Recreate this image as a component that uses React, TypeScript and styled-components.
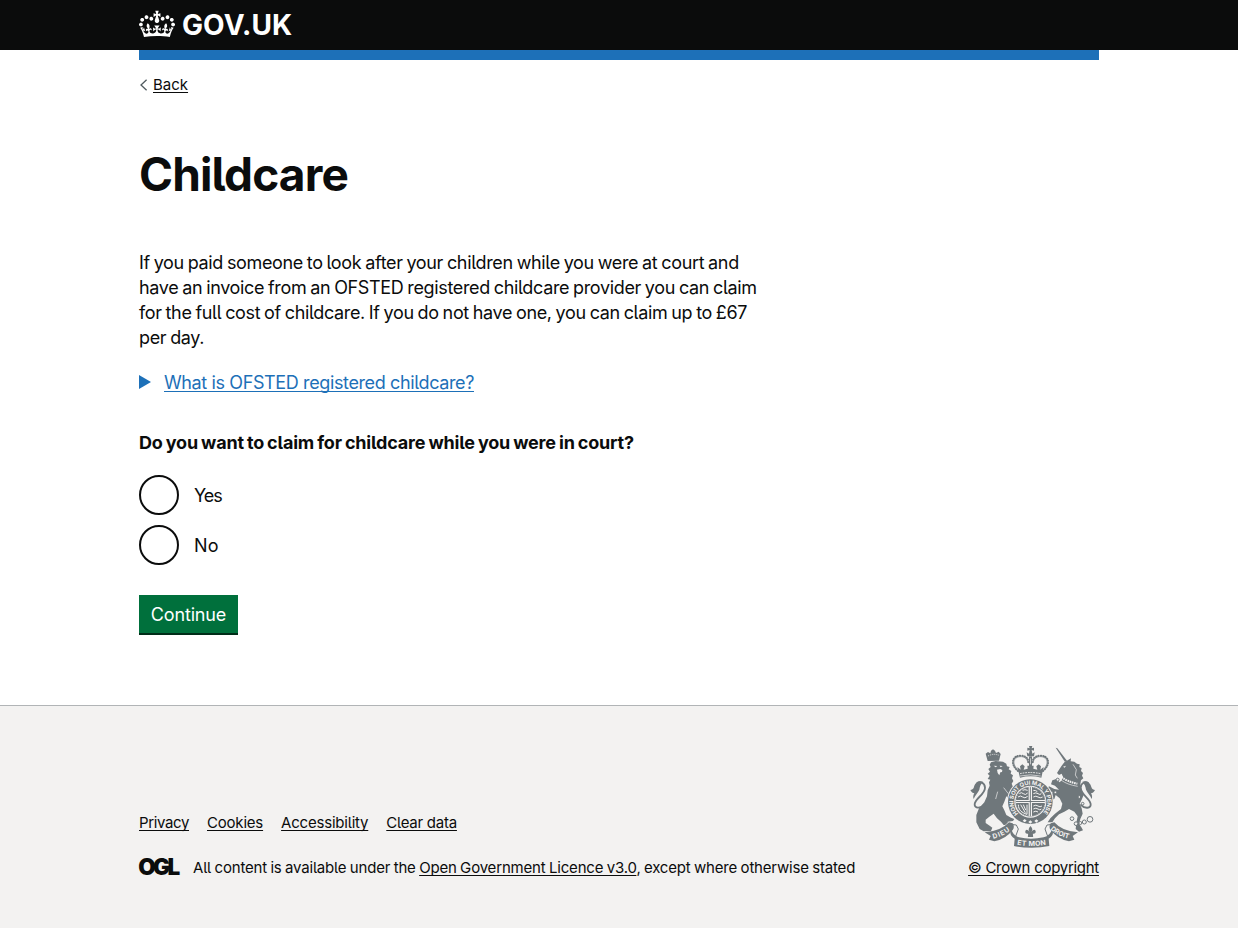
import React from 'react';
import styled, { createGlobalStyle } from 'styled-components';

const ink = '#0b0c0c';
const blue = '#1d70b8';
const grey = '#f3f2f1';
const crestGrey = '#6f777b';

const GlobalStyle = createGlobalStyle`
  *, *::before, *::after { box-sizing: border-box; }
  body {
    margin: 0;
    background: #fff;
    color: ${ink};
    font-family: Inter, "Liberation Sans", sans-serif;
    font-feature-settings: "cv05";
  }
  h1, p, ul, fieldset, legend { margin: 0; padding: 0; border: 0; }
`;

const Page = styled.div`
  min-height: 928px;
  display: flex;
  flex-direction: column;
`;

const Container = styled.div`
  width: 960px;
  margin: 0 auto;
`;

const Header = styled.header`
  height: 50px;
  background: ${ink};
`;

const Logo = styled.a`
  display: flex;
  align-items: center;
  height: 50px;
  color: #fff;
  text-decoration: none;
  svg { display: block; fill: currentColor; margin-top: -2px; }
`;

const LogoText = styled.span`
  margin-left: 7px;
  font-size: 28px;
  font-weight: 700;
  line-height: 34px;
  letter-spacing: 0.1px;
`;

const BlueBar = styled.div`
  height: 10px;
  background: ${blue};
`;

const Link = styled.a<{ $track?: number; $color?: string }>`
  color: ${p => p.$color || ink};
  letter-spacing: ${p => p.$track || 0}px;
  text-decoration: underline;
  text-decoration-thickness: 1px;
  text-underline-offset: 2px;
  text-decoration-skip-ink: none;
`;

const BackRow = styled.div`
  display: flex;
  align-items: center;
  gap: 5px;
  margin-top: 15px;
  font-size: 15px;
  line-height: 20px;
`;

const Main = styled.main`
  padding-top: 54px;
`;

const Title = styled.h1`
  font-size: 46px;
  line-height: 50px;
  font-weight: 700;
  letter-spacing: -0.85px;
  margin-bottom: 51px;
`;

const Column = styled.div`
  width: 630px;
  font-size: 18px;
  line-height: 25px;
`;

const Paragraph = styled.p`
  letter-spacing: -0.35px;
  word-spacing: -0.82px;
  margin-bottom: 20px;
`;

const Summary = styled.div`
  display: flex;
  align-items: center;
  gap: 13px;
  margin-bottom: 35px;
`;

const Triangle = styled.span`
  border-style: solid;
  border-width: 7px 0 7px 12px;
  border-color: transparent transparent transparent ${blue};
  margin-top: -1px;
`;

const Legend = styled.legend`
  font-weight: 700;
  letter-spacing: -0.18px;
  word-spacing: -1px;
  margin-bottom: 20px;
`;

const Radios = styled.div`
  display: flex;
  flex-direction: column;
  gap: 10px;
  margin-bottom: 30px;
`;

const RadioLabel = styled.label<{ $track?: number }>`
  display: flex;
  align-items: center;
  height: 40px;
  gap: 15px;
  letter-spacing: ${p => p.$track || 0}px;
`;

const Radio = styled.input`
  appearance: none;
  width: 40px;
  height: 40px;
  margin: 0;
  border: 2px solid ${ink};
  border-radius: 50%;
  background: #fff;
`;

const Button = styled.button`
  display: block;
  width: 99px;
  height: 38px;
  padding: 7px 0 6px;
  border: 0;
  background: #00703c;
  box-shadow: 0 2px 0 #002d18;
  color: #fff;
  font: inherit;
  font-feature-settings: inherit;
  line-height: 25px;
  letter-spacing: -0.15px;
`;

const Footer = styled.footer`
  flex: 1;
  margin-top: 72px;
  border-top: 1px solid #b1b4b6;
  background: ${grey};
  font-size: 15px;
  line-height: 20px;
`;

const FooterInner = styled(Container)`
  display: flex;
  justify-content: space-between;
  align-items: flex-end;
  padding-top: 40px;
`;

const FooterNav = styled.nav`
  display: flex;
  gap: 18px;
  margin-bottom: 25px;
`;

const Licence = styled.div`
  display: flex;
  align-items: center;
  gap: 12px;
  letter-spacing: -0.18px;
  word-spacing: -0.6px;
  svg { display: block; margin-top: -3px; }
`;

const Copyright = styled.div`
  display: flex;
  flex-direction: column;
  align-items: center;
  gap: 10px;
  svg { display: block; margin-right: 2px; }
`;

const CrownMark = () => (
  <svg width="36" height="30" viewBox="0 0 132 97" aria-hidden="true">
    <path fillRule="evenodd" d="M25 30.2c3.5 1.5 7.7-.2 9.1-3.7 1.5-3.6-.2-7.8-3.9-9.2-3.6-1.4-7.6.3-9.1 3.9-1.4 3.5.3 7.5 3.9 9zM9 39.5c3.6 1.5 7.8-.2 9.2-3.7 1.5-3.6-.2-7.8-3.9-9.1-3.6-1.5-7.6.2-9.1 3.8-1.4 3.5.3 7.5 3.8 9zM4.4 57.2c3.5 1.5 7.7-.2 9.1-3.8 1.5-3.6-.2-7.7-3.9-9.1-3.5-1.5-7.6.3-9.1 3.8-1.4 3.5.3 7.6 3.9 9.1zm38.3-21.4c3.5 1.5 7.7-.2 9.1-3.8 1.5-3.6-.2-7.7-3.9-9.1-3.6-1.5-7.6.3-9.1 3.8-1.3 3.6.4 7.7 3.9 9.1zm64.4-5.6c-3.6 1.5-7.8-.2-9.1-3.7-1.5-3.6.2-7.8 3.8-9.2 3.6-1.4 7.7.3 9.2 3.9 1.3 3.5-.4 7.5-3.9 9zm15.9 9.3c-3.6 1.5-7.7-.2-9.1-3.7-1.5-3.6.2-7.8 3.7-9.1 3.6-1.5 7.7.2 9.2 3.8 1.5 3.5-.3 7.5-3.8 9zm4.7 17.7c-3.6 1.5-7.8-.2-9.2-3.8-1.5-3.6.2-7.7 3.9-9.1 3.6-1.5 7.7.3 9.2 3.8 1.3 3.5-.4 7.6-3.9 9.1zM89.3 35.8c-3.6 1.5-7.8-.2-9.2-3.8-1.4-3.6.2-7.7 3.9-9.1 3.6-1.5 7.7.3 9.2 3.8 1.4 3.6-.3 7.7-3.9 9.1zM69.7 17.7l8.9 4.7V9.3l-8.9 2.8c-.2-.3-.5-.6-.9-.9L72.4 0H59.6l3.5 11.2c-.3.3-.6.5-.9.9l-8.8-2.8v13.1l8.8-4.7c.3.3.6.7.9.9l-5 15.4v.1c-.2.8-.4 1.6-.4 2.4 0 4.1 3.1 7.5 7 8.1h.2c.3 0 .7.1 1 .1.4 0 .7 0 1-.1h.2c4-.6 7.1-4.1 7.1-8.1 0-.8-.1-1.7-.4-2.4V34l-5.1-15.4c.4-.2.7-.6 1-.9zM66 92.8c16.9 0 32.8 1.1 47.1 3.2 4-16.9 8.9-26.7 14-33.5l-9.6-3.4c1 4.9 1.1 7.2 0 10.2-1.5-1.4-3-4.3-4.2-8.7L108.6 76c2.8-2 5-3.2 7.5-3.3-4.4 9.4-10 11.9-13.6 11.2-4.3-.8-6.3-4.6-5.6-7.9 1-4.7 5.7-5.9 8-.5 4.3-8.7-3-11.4-7.6-8.8 7.1-7.2 7.9-13.5 2.1-21.1-8 6.1-8.1 12.3-4.5 20.8-4.7-5.4-12.1-2.5-9.5 6.2 3.4-5.2 7.9-2 7.2 3.1-.6 4.3-6.4 7.8-13.5 7.2-10.3-.9-10.9-8-11.2-13.8 2.5-.5 7.1 1.8 11 7.3L80.2 60c-4.1 4.4-8 5.3-12.3 5.4 1.4-4.4 8-11.6 8-11.6H55.5s6.4 7.2 7.9 11.6c-4.2-.1-8-1-12.3-5.4l1.4 16.4c3.9-5.5 8.5-7.7 10.9-7.3-.3 5.8-.9 12.8-11.1 13.8-7.2.6-12.9-2.9-13.5-7.2-.7-5 3.8-8.3 7.1-3.1 2.7-8.7-4.6-11.6-9.4-6.2 3.7-8.5 3.6-14.7-4.6-20.8-5.8 7.6-5 13.9 2.2 21.1-4.7-2.6-11.9.1-7.7 8.8 2.3-5.5 7.1-4.2 8.1.5.7 3.3-1.3 7.1-5.7 7.9-3.5.7-9-1.8-13.5-11.2 2.5.1 4.7 1.3 7.5 3.3l-4.7-15.4c-1.2 4.4-2.7 7.2-4.3 8.7-1.1-3-.9-5.3 0-10.2l-9.5 3.4c5 6.9 9.9 16.7 14 33.5 14.8-2.1 30.8-3.2 47.7-3.2z" />
  </svg>
);

const OglMark = () => (
  <svg width="42" height="18" viewBox="0 0 42 18" overflow="visible" aria-hidden="true">
    <text transform="translate(-0.8 17) scale(1 1)" letterSpacing="-2.6" fontFamily="Inter" fontWeight="900" fontSize="22.5" fill={ink}>OGL</text>
  </svg>
);

const Crest = () => (
  <svg width="125" height="102" viewBox="9 9 375 306" fill={crestGrey} stroke="none" aria-hidden="true">
    <defs>
      <path id="garter" d="M154 212A51 51 0 1 1 226 212" />
      <path id="dieu" d="M79 287Q108 281 134 259" />
      <path id="mon" d="M150 305Q193 313 239 305" />
      <path id="droit" d="M250 259Q276 282 308 287" />
    </defs>

    {/* lion */}
    <path d="M62 54L56 32l7-5 7 4 2-8 6-4 6 4 3 7 8-4 6 7-5 20z" />
    <path fill="none" stroke={grey} strokeWidth="2.500" strokeDasharray="3 3" d="M63 39q17-9 33-2" />
    <path d="M72 58L86 54 108 56 118 62 120 70 128 72 125 79 133 84 131 92 138 97 135 106 139 114 134 122 138 132 133 140 141 152 148 164 149 178 141 186 133 182 130 172 118 160 112 176 106 190 112 202 118 216 132 224 142 228 138 234 122 236 124 246 110 246 102 236 90 226 80 212 66 222 56 230 56 240 68 248 76 254 72 264 50 265 38 258 28 238 28 216 36 196 52 178 60 160 62 142 68 128 66 118 70 110 62 108 68 98 62 92 69 86 64 78 71 72 68 65z" />
    <path fill="none" stroke={crestGrey} strokeWidth="5.500" strokeLinecap="round" d="M54 184C40 198 22 197 23 183C25 166 54 154 54 134C53 118 38 115 31 120" />
    <path d="M48 116C32 110 23 122 21 132C19 139 14 140 10 141C14 148 17 150 22 151C18 157 18 164 20 168C24 156 33 150 37 140C38 130 42 122 48 116z" />
    <path fill={grey} d="M80 68l11 1-5 4zM98 68l9 1-6 4zM90 80l10-2 6 3-1 6-5 1-3 9-5-7z" />
    <path fill="none" stroke={grey} strokeWidth="2" d="M92 146l-6 22M110 134l14 18" />

    {/* unicorn */}
    <path d="M266 14l5 2 29 37-6 4z" />
    <path d="M292 58L302 52 312 46 311 55 322 56 330 62 338 64 337 72 344 76 342 84 348 90 345 98 349 106 342 112 340 124 344 140 350 156 344 170 338 182 344 196 347 212 340 228 336 242 344 254 348 262 336 266 326 258 328 240 332 220 322 206 306 198 292 206 276 214 264 226 256 238 242 238 250 226 264 212 282 198 286 182 278 166 266 156 262 168 252 172 248 162 256 156 256 146 246 148 240 138 246 130 262 138 276 140 264 128 252 124 256 112 268 108 278 118 284 112 288 102 284 92 276 96 270 90 276 80 284 68z" />
    <path fill="none" stroke={crestGrey} strokeWidth="5.500" strokeLinecap="round" d="M342 186C354 198 372 197 371 183C369 166 341 154 341 134C342 118 356 115 363 120" />
    <path d="M346 116C362 110 371 122 373 132C375 139 380 140 384 141C380 148 377 150 372 151C376 157 376 164 374 168C370 156 361 150 357 140C356 130 352 122 346 116z" />
    <path fill={grey} d="M288 71l9-3-4 6z" />
    <path fill="none" stroke={grey} strokeWidth="6" strokeDasharray="5 2" d="M284 102q16 14 47 20" />
    <path fill="none" stroke={grey} strokeWidth="2" d="M282 111q18 14 50 19M318 64l10 16-3 16 6 10" />
    <g fill={grey} stroke={crestGrey} strokeWidth="3">
      <circle cx="315" cy="227" r="5.500" /><circle cx="327" cy="242" r="5.500" /><circle cx="340" cy="240" r="4.500" />
      <circle cx="352" cy="237" r="6" /><circle cx="369" cy="229" r="8.500" /><circle cx="337" cy="162" r="4" />
      <circle cx="347" cy="182" r="4" />
      <circle cx="272" cy="110" r="4.500" /><circle cx="265" cy="148" r="4" />
    </g>

    {/* crown */}
    <path d="M186 9h10l-2 7 7-2v9l-7-2 2 11 7-4-2 12h-20l-2-12 7 4 2-11-7 2v-9l7 2z" />
    <g fill="none" stroke={crestGrey}>
      <path strokeWidth="6" strokeLinecap="round" strokeDasharray="1 6" d="M153 84C128 62 136 37 162 38C178 39 184 48 184 58M228 84C253 62 245 37 219 38C203 39 197 48 197 58" />
      <path strokeWidth="2" d="M155 82C131 62 140 40 163 41C176 42 181 50 182 58M226 82C250 62 241 40 218 41C205 42 200 50 199 58" />
      <path strokeWidth="9" d="M190.500 40v36" />
    </g>
    <path d="M151 72l10 8-2-10 7-6 7 6-3 10 12-3-1-9h19l-1 9 12 3-3-10 7-6 7 6-2 10 10-8-7 32q-32-8-64 0z" />
    <path fill="none" stroke={grey} strokeWidth="3" strokeDasharray="5 3" d="M159 92q31-7 62 0" />
    <path fill="none" stroke={grey} strokeWidth="2" d="M159 99q31-7 62 0M190.500 46v18" />

    {/* garter */}
    <circle cx="190" cy="176" r="70" fill={grey} />
    <circle cx="190" cy="176" r="67" />
    <circle cx="190" cy="176" r="48" fill={grey} />
    <circle cx="190" cy="176" r="45" />
    <text fill={grey} fontFamily="Inter" fontWeight="700" fontSize="17">
      <textPath href="#garter" textLength="236">HONI SOIT QUI MAL Y PENSE</textPath>
    </text>
    <path fill={grey} d="M185 132h10v88h-10zM146 171h88v9h-88z" />
    <path d="M188.500 132h3v88h-3zM146 174h88v3h-88z" />
    <g fill="none" stroke={grey} strokeWidth="3">
      <path d="M157 152q6-6 12 0t13-2M153 162q8-6 14 0t15-2M167 142q6-4 15 0M199 142q8 0 12 4M199 152q8-5 14 0t10 0M199 162q8-5 14 0t14 0" />
      <path d="M154 185c0 15 10 24 26 29V185M161 185l14 24M169 185l7 16M199 189q8-5 14 0t12 0M199 198q8-5 14 0t10 0M199 207q8-5 14 0" />
      <path strokeWidth="2" d="M190 132A44 44 0 0 0 190 220A44 44 0 0 0 190 132" strokeDasharray="3 3" />
    </g>
    <path fill={grey} d="M167 233l6-5 6 5-6 5zM184 237l6-5 6 5-6 5zM202 234l6-5 6 4-6 6z" />

    {/* ribbon and fleur */}
    <path fill={grey} stroke={grey} strokeWidth="4" d="M55 270q46-4 70-31l12 2 18 2-5 60-16-20q-16 14-48 22l-16-5 4-11z" />
    <path fill={grey} stroke={grey} strokeWidth="4" d="M331 270q-46-4-68-31l-12 2-18 2 5 60 16-20q16 14 48 22l16-5-4-11z" />
    <path fill={grey} stroke={crestGrey} strokeWidth="3" d="M130 244l18 2 6 12-8 22M258 244l-18 2-6 12 8 22" />
    <path d="M53 268q48-3 73-30l11 3q7 11 0 20-20 27-55 34l-16-5 5-11z" />
    <path d="M333 268q-48-3-71-30l-11 3q-7 11 0 20 20 27 55 34l16-5-5-11z" />
    <path d="M133 258q5 20 23 25 35 8 74 0 20-5 25-25l3 10q0 12-13 19l2 22q-52 11-106 0l2-22q-13-7-13-19z" />
    <g fill={grey} fontFamily="Inter" fontWeight="700">
      <text fontSize="20"><textPath href="#dieu" textLength="56">DIEU</textPath></text>
      <text fontSize="21"><textPath href="#mon" textLength="88">ET MON</textPath></text>
      <text fontSize="20"><textPath href="#droit" textLength="62">DROIT</textPath></text>
    </g>
    <path fill={grey} d="M161 252q29 6 60 0l4 28q-34 7-68 0z" />
    <path d="M190.500 249q10 11 2 18 12-14 14 0-2 7-9 5l1 10h-16l1-10q-8 2-9-5 2-14 14 0-8-7 2-18z" />
  </svg>
);

const navLinks = [
  { label: 'Privacy', track: -0.37 },
  { label: 'Cookies', track: -0.2 },
  { label: 'Accessibility', track: -0.21 },
  { label: 'Clear data', track: -0.24 },
];

const options = [
  { label: 'Yes', track: -1.1 },
  { label: 'No', track: 0.1 },
];

export default function App() {
  return (
    <Page>
      <GlobalStyle />
      <Header>
        <Container>
          <Logo href="#">
            <CrownMark />
            <LogoText>GOV.UK</LogoText>
          </Logo>
        </Container>
      </Header>
      <Container>
        <BlueBar />
        <BackRow>
          <svg width="9" height="12" viewBox="0 0 9 12" fill="none" stroke="#505a5f" strokeWidth="1.3" aria-hidden="true">
            <path d="M7.6 .8L2 6l5.600 5.200" />
          </svg>
          <Link href="#">Back</Link>
        </BackRow>
        <Main>
          <Title>Childcare</Title>
          <Column>
            <Paragraph>
              If you paid someone to look after your children while you were at court and have an
              invoice from an OFSTED registered childcare provider you can claim for the full cost
              of childcare. If you do not have one, you can claim up to £67 per day.
            </Paragraph>
            <Summary>
              <Triangle />
              <Link href="#" $color={blue} $track={-0.38}>What is OFSTED registered childcare?</Link>
            </Summary>
            <fieldset>
              <Legend>Do you want to claim for childcare while you were in court?</Legend>
              <Radios>
                {options.map(o => (
                  <RadioLabel key={o.label} $track={o.track}>
                    <Radio type="radio" name="childcare" />
                    {o.label}
                  </RadioLabel>
                ))}
              </Radios>
            </fieldset>
            <Button type="button">Continue</Button>
          </Column>
        </Main>
      </Container>
      <Footer>
        <FooterInner>
          <div>
            <FooterNav>
              {navLinks.map(l => (
                <Link key={l.label} href="#" $track={l.track}>{l.label}</Link>
              ))}
            </FooterNav>
            <Licence>
              <OglMark />
              <span>
                All content is available under the{' '}
                <Link href="#" $track={-0.18}>Open Government Licence v3.0</Link>
                , except where otherwise stated
              </span>
            </Licence>
          </div>
          <Copyright>
            <Crest />
            <Link href="#" $track={-0.28}>© Crown copyright</Link>
          </Copyright>
        </FooterInner>
      </Footer>
    </Page>
  );
}
